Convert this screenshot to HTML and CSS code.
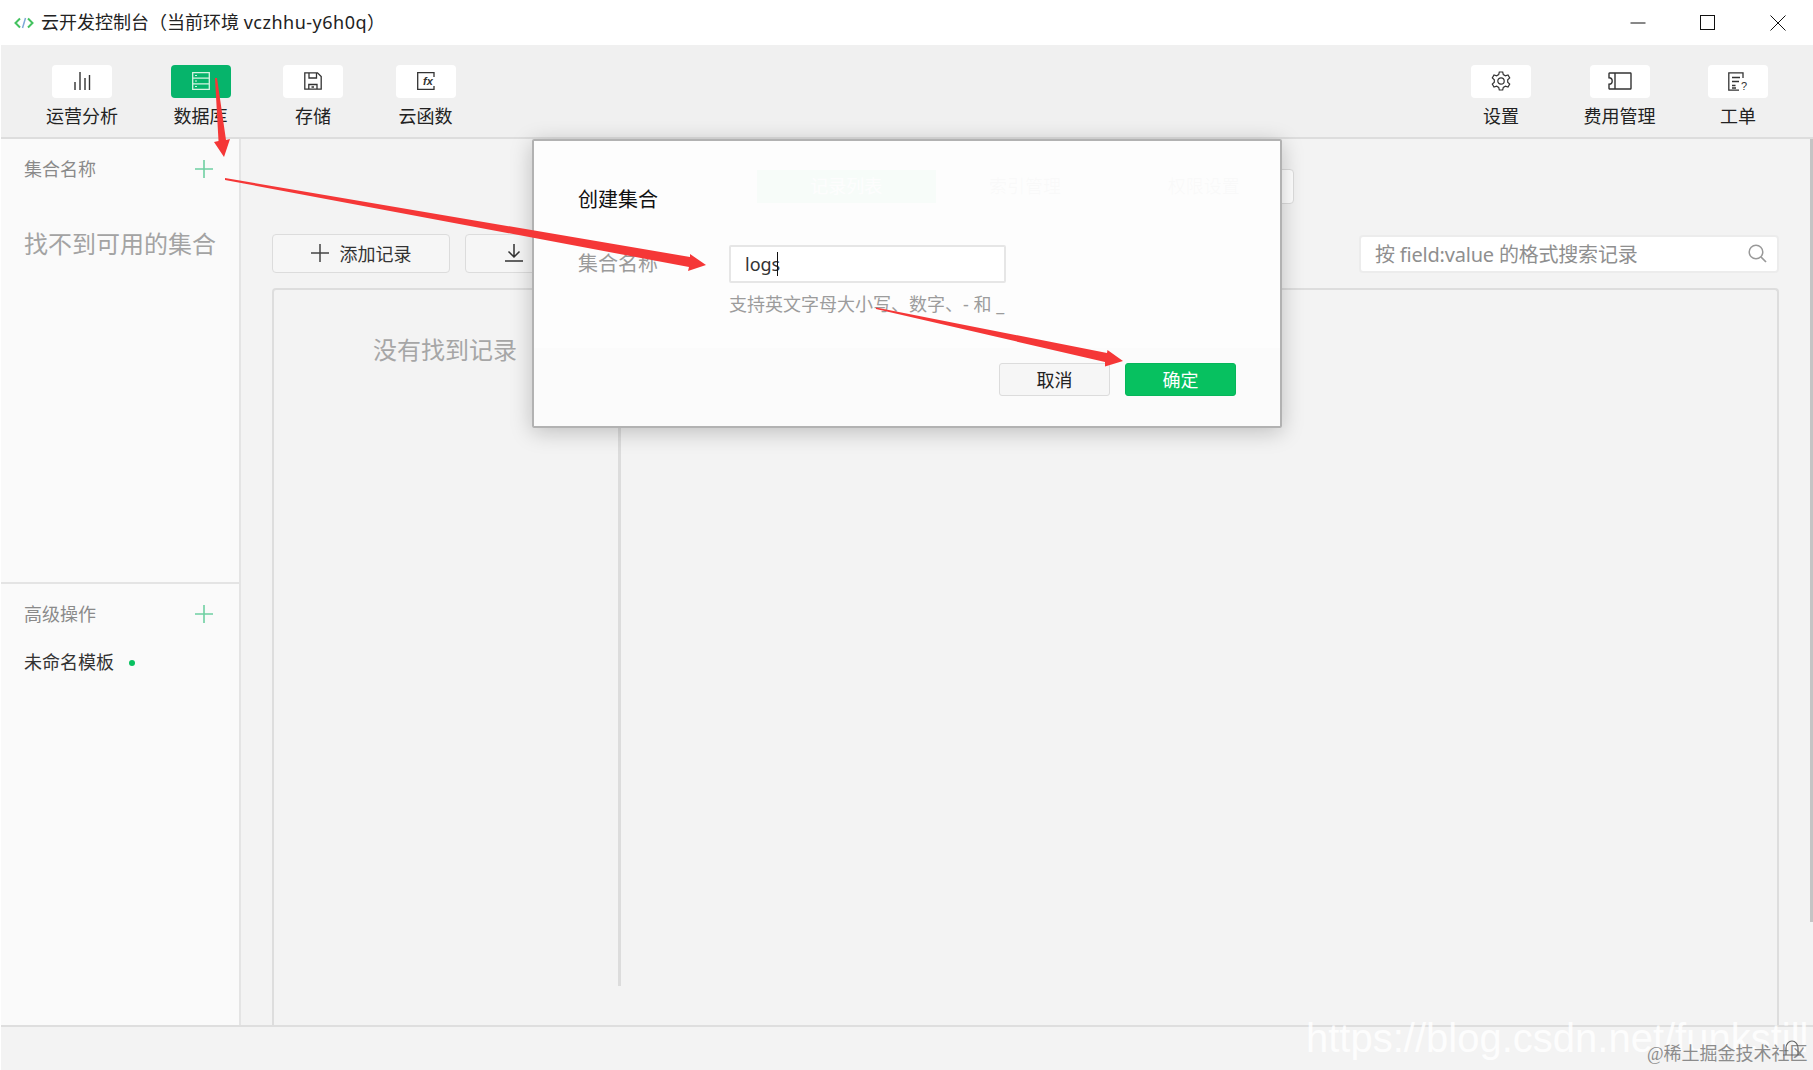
FILE: index.html
```html
<!DOCTYPE html>
<html lang="zh-CN">
<head>
<meta charset="utf-8">
<title>云开发控制台</title>
<link rel="stylesheet" href="styles.css">
</head>
<body>
<div class="app">
  <header class="titlebar">
    <svg class="logo" width="20" height="14" viewBox="0 0 20 14"><path d="M6 2.500 1.500 7 6 11.500M14 2.500 18.500 7 14 11.500" fill="none" stroke="#43c25f" stroke-width="2"/><path d="M11.500 2 8.500 12" stroke="#7fa8d8" stroke-width="1.500"/></svg>
    <span class="apptitle">云开发控制台（当前环境 <span class="envid">vczhhu-y6h0q</span>）</span>
    <div class="winctl">
      <svg width="16" height="16" viewBox="0 0 16 16"><path d="M0.500 8H15.500" stroke="#111" fill="none"/></svg>
      <svg width="16" height="16" viewBox="0 0 16 16"><rect x="0.500" y="0.500" width="14" height="14" stroke="#111" fill="none"/></svg>
      <svg width="16" height="16" viewBox="0 0 16 16"><path d="M0.500 0.500 15.500 15.500M15.500 0.500 0.500 15.500" stroke="#111" fill="none"/></svg>
    </div>
  </header>

  <nav class="toolbar">
    <div class="toolgroup">
      <div class="tool">
        <div class="toolicon"><svg width="18" height="20" viewBox="0 0 18 20"><path d="M2 19V11M7 19V1M12 19V7M16.500 19V4" stroke="#333" stroke-width="1.400" fill="none"/></svg></div>
        <span class="toollabel">运营分析</span>
      </div>
      <div class="tool">
        <div class="toolicon active"><svg width="18" height="18" viewBox="0 0 18 18"><path d="M.7.7H17.300V17.300H.7ZM.7 6.200H17.300M.7 11.800H17.300" fill="none" stroke="#d6f3e2" stroke-width="1.300"/><path d="M3 3.500H5M3 9H5M3 14.500H5" stroke="#d6f3e2"/></svg></div>
        <span class="toollabel">数据库</span>
      </div>
      <div class="tool">
        <div class="toolicon"><svg width="18" height="18" viewBox="0 0 18 18"><path d="M.8.8H13.500L17.200 4.500V17.200H.8ZM5 .8V6H12.500V.8M4.800 17.200V12.500H13V17.200M7.500 15H10" fill="none" stroke="#333" stroke-width="1.300"/></svg></div>
        <span class="toollabel">存储</span>
      </div>
      <div class="tool">
        <div class="toolicon"><svg width="18" height="18" viewBox="0 0 18 18"><path d="M17 5V.7H.7V17.300H17V14" fill="none" stroke="#333" stroke-width="1.300"/><text class="fx" x="6" y="12.500">fx</text></svg></div>
        <span class="toollabel">云函数</span>
      </div>
    </div>
    <div class="toolgroup">
      <div class="tool">
        <div class="toolicon"><svg width="20" height="20" viewBox="0 0 20 20"><path d="M8.300 1H11.700L12.300 3.600 14.400 4.800 17 4 18.700 7 16.700 8.800V11.200L18.700 13 17 16 14.400 15.200 12.300 16.400 11.700 19H8.300L7.700 16.400 5.600 15.200 3 16 1.300 13 3.300 11.200V8.800L1.300 7 3 4 5.600 4.800 7.700 3.600Z" fill="none" stroke="#333" stroke-width="1.200"/><circle cx="10" cy="10" r="3.200" fill="none" stroke="#333" stroke-width="1.200"/></svg></div>
        <span class="toollabel">设置</span>
      </div>
      <div class="tool">
        <div class="toolicon"><svg width="24" height="18" viewBox="0 0 24 18"><path d="M2 1H22.500A.8.8 0 0 1 23 1.800V16.200A.8.8 0 0 1 22.500 17H2A.8.8 0 0 1 1 16.200V12.200A3.200 3.200 0 0 0 1 5.800V1.800A.8.8 0 0 1 2 1ZM7 1V17" fill="none" stroke="#333" stroke-width="1.400"/></svg></div>
        <span class="toollabel">费用管理</span>
      </div>
      <div class="tool">
        <div class="toolicon"><svg width="20" height="19" viewBox="0 0 20 19"><path d="M15 6V.8H.8V18.200H11M4 5.500H12M4 9.500H11M4 13.500H7.500M4 16H8" fill="none" stroke="#333" stroke-width="1.300"/><text class="qmark" x="13" y="17.500">?</text></svg></div>
        <span class="toollabel">工单</span>
      </div>
    </div>
  </nav>

  <div class="content">
    <aside class="sidebar">
      <section class="collections">
        <div class="sidehead">
          <span>集合名称</span>
          <svg width="18" height="18" viewBox="0 0 18 18"><path d="M9 0V18M0 9H18" stroke="#6fd0a2" stroke-width="1.600"/></svg>
        </div>
        <p class="sideempty">找不到可用的集合</p>
      </section>
      <section class="advanced">
        <div class="sidehead">
          <span>高级操作</span>
          <svg width="18" height="18" viewBox="0 0 18 18"><path d="M9 0V18M0 9H18" stroke="#6fd0a2" stroke-width="1.600"/></svg>
        </div>
        <div class="template"><span>未命名模板</span><i class="dot"></i></div>
      </section>
    </aside>

    <main class="main">
      <div class="tabs">
        <span class="tab on">记录列表</span>
        <span class="tab">索引管理</span>
        <span class="tab">权限设置</span>
      </div>
      <div class="actions">
        <button class="btn add"><svg width="18" height="18" viewBox="0 0 18 18"><path d="M9 0V18M0 9H18" stroke="#444" stroke-width="1.500"/></svg>添加记录</button>
        <button class="btn export"><svg width="18" height="18" viewBox="0 0 18 18"><path d="M9 0V12.500M3.500 7.500 9 13 14.500 7.500M0 17H18" stroke="#333" stroke-width="1.500" fill="none"/></svg></button>
        <div class="search">
          <span>按 field:value 的格式搜索记录</span>
          <svg width="19" height="19" viewBox="0 0 19 19"><circle cx="8" cy="8" r="6.800" fill="none" stroke="#999" stroke-width="1.500"/><path d="M13 13 18 18" stroke="#999" stroke-width="1.700"/></svg>
        </div>
      </div>
      <div class="panel">
        <div class="records"><p class="noresult">没有找到记录</p></div>
      </div>
      <div class="scroll"></div>
    </main>
  </div>

  <footer class="status"></footer>
</div>

<div class="dialog">
  <div class="dlghead">创建集合</div>
  <div class="dlgbody">
    <div class="field">
      <label class="fieldlabel">集合名称</label>
      <div class="input"><span>logs</span><i class="caret"></i></div>
    </div>
    <p class="hint">支持英文字母大小写、数字、- 和 _</p>
  </div>
  <div class="dlgfoot">
    <button class="dbtn cancel">取消</button>
    <button class="dbtn ok">确定</button>
  </div>
</div>

<svg class="arrows" width="1813" height="1070" viewBox="0 0 1813 1070">
  <polygon points="215,78 217,78 226,140 230,139 224,157 214,142 218.500,141"/>
  <polygon points="225,178 690,257 690,254 706,265 688,271 689,267 225,180"/>
  <polygon points="876,307.500 1107,353 1107.500,350 1123,361 1105,366.500 1105,362 876,309"/>
</svg>

<span class="wm-url">https://blog.csdn.net/funkstill</span>
<span class="wm-site">@稀土掘金技术社区</span>
<svg class="wm-bell" width="18" height="20" viewBox="0 0 18 20"><path d="M3 16V9A6 7 0 0 1 15 9V16M0 16H18" fill="none" stroke="#666" stroke-width="1.200"/></svg>
</body>
</html>
```

FILE: styles.css
```css
* { box-sizing: border-box; }
html, body { margin: 0; padding: 0; }
body {
  width: 1813px;
  height: 1070px;
  overflow: hidden;
  background: #fff;
  font-family: "Noto Sans", "Noto Sans CJK SC", sans-serif;
  font-size: 18px;
  color: #222;
  position: relative;
}
p { margin: 0; }
button { font: inherit; }

.app { display: flex; flex-direction: column; height: 1070px; padding-left: 1px; }

.titlebar { height: 45px; display: flex; align-items: center; padding-left: 13px; background: #fff; }
.logo { margin-right: 7px; }
.apptitle { line-height: 45px; color: #222; }
.envid { letter-spacing: 0.5px; }
.winctl { margin-left: auto; display: flex; gap: 54px; padding-right: 27px; }

.toolbar {
  height: 94px;
  flex: none;
  background: #f0f0f0;
  border-bottom: 2px solid #ddd;
  display: flex;
  justify-content: space-between;
  padding: 20px 45px 0 45px;
}
.toolgroup { display: flex; gap: 52.5px; }
.tool { display: flex; flex-direction: column; align-items: center; min-width: 60px; }
.toolicon {
  width: 60px;
  height: 33px;
  background: #fff;
  border-radius: 4px;
  display: flex;
  align-items: center;
  justify-content: center;
  padding-bottom: 1px;
}
.toolicon.active { background: #06b46b; }
.toollabel { line-height: 26px; margin-top: 5px; color: #222; white-space: nowrap; }
.fx { font: italic bold 11px "Liberation Sans", sans-serif; fill: #333; }
.qmark { font: 11px "Liberation Sans", sans-serif; fill: #333; }

.content { flex: 1; display: flex; min-height: 0; }

.sidebar { width: 240px; flex: none; background: #fafafa; border-right: 2px solid #e4e4e4; display: flex; flex-direction: column; }
.collections { height: 445px; flex: none; border-bottom: 2px solid #e4e4e4; }
.sidehead { height: 60px; display: flex; align-items: center; justify-content: space-between; padding: 0 26px 0 23px; color: #8a8a8a; line-height: 26px; }
.sideempty { margin: 27px 0 0 23px; font-size: 24px; line-height: 36px; color: #a3a3a3; }
.advanced { flex: 1; }
.template { display: flex; align-items: center; gap: 15px; padding-left: 23px; line-height: 26px; margin-top: 5px; color: #333; }
.dot { width: 6px; height: 6px; border-radius: 50%; background: #07c160; margin-top: 2px; }

.main { flex: 1; min-width: 0; background: #f3f3f3; padding: 30px 34px 0 31px; display: flex; flex-direction: column; position: relative; }
.tabs { width: 538px; height: 35px; flex: none; align-self: flex-end; margin-right: 485px; display: flex; border: 1px solid #ddd; border-radius: 4px; background: #fff; }
.tab { flex: 1; text-align: center; line-height: 33px; color: #666; }
.tab.on { background: #07c160; color: #fff; }

.actions { display: flex; align-items: center; gap: 15px; height: 39px; flex: none; margin-top: 30px; }
.btn {
  height: 39px;
  border: 1px solid #dcdcdc;
  border-radius: 4px;
  background: #f6f6f6;
  display: flex;
  align-items: center;
  justify-content: center;
  color: #333;
  padding: 0 0 1px;
}
.add { width: 178px; gap: 11px; }
.export { width: 97px; }
.search {
  margin-left: auto;
  width: 420px;
  height: 38px;
  background: #fff;
  border: 2px solid #ececec;
  border-radius: 4px;
  display: flex;
  align-items: center;
  justify-content: space-between;
  padding: 0 10px 0 14px;
  color: #8f8f8f;
  font-size: 20px;
  letter-spacing: -0.2px;
}

.panel { flex: 1; margin-top: 15px; border: 2px solid #ddd; border-bottom: 0; border-radius: 4px 4px 0 0; padding-bottom: 39px; min-height: 0; }
.records { width: 347px; height: 100%; border-right: 3px solid #dcdcdc; padding: 42px 2px 0 0; }
.noresult { font-size: 24px; line-height: 36px; color: #a6a6a6; text-align: center; }
.scroll { position: absolute; right: 0; top: 0; width: 3px; height: 783px; background: #c4c4c4; }

.status { height: 45px; flex: none; background: #f3f3f3; border-top: 2px solid #dedede; }

.dialog {
  position: absolute;
  left: 532px;
  top: 139px;
  width: 750px;
  height: 289px;
  border: 2px solid #b2b2b2;
  border-radius: 2px;
  box-shadow: 0 4px 22px rgba(0, 0, 0, 0.22);
  display: flex;
  flex-direction: column;
}
.dlghead { height: 74px; flex: none; background: rgba(253, 253, 253, 0.975); padding: 45px 0 0 44px; font-size: 20px; line-height: 28px; color: #111; }
.dlgbody { height: 133px; flex: none; background: #fdfdfd; padding: 30px 0 0 44px; }
.field { display: flex; align-items: center; gap: 71px; }
.fieldlabel { font-size: 20px; line-height: 28px; color: #9a9a9a; }
.input { width: 277px; height: 38px; background: #fff; border: 2px solid #e6e6e6; border-radius: 2px; display: flex; align-items: center; padding-left: 14px; color: #333; }
.caret { width: 1px; height: 24px; background: #111; margin-left: -3px; }
.hint { margin: 8px 0 0 151px; line-height: 26px; color: #9c9c9c; white-space: pre; }
.dlgfoot { flex: 1; background: #fbfbfb; display: flex; justify-content: flex-end; gap: 15px; padding: 15px 44px 0 0; }
.dbtn { width: 111px; height: 33px; border-radius: 3px; line-height: 30px; padding: 0; }
.cancel { background: #f6f6f6; border: 1px solid #dcdcdc; color: #222; }
.ok { background: #07c160; border: 1px solid #06b65a; color: #fff; }

.arrows { position: absolute; left: 0; top: 0; pointer-events: none; }
.arrows polygon { fill: #f53737; }

.wm-url { position: absolute; left: 1306px; top: 1014px; font-family: "Liberation Sans", sans-serif; font-size: 40px; line-height: 48px; color: rgba(255, 255, 255, 0.85); white-space: nowrap; }
.wm-site { position: absolute; left: 1647px; top: 1042px; font-family: "Liberation Serif", "Noto Sans CJK SC", serif; font-size: 18px; line-height: 24px; color: #8c8c8c; white-space: nowrap; }
.wm-bell { position: absolute; left: 1783px; top: 1039px; }
```
